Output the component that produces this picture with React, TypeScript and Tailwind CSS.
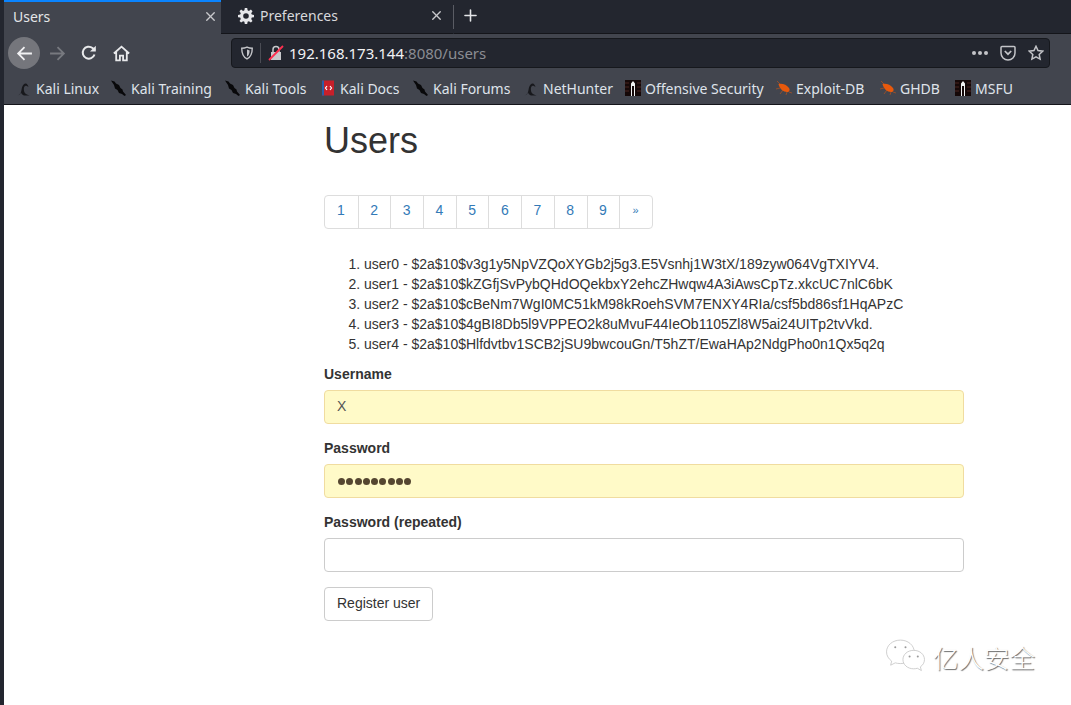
import React from 'react';
import { Plus, X } from 'lucide-react';

const body = "font-['Liberation_Sans',Arial,sans-serif]";
const ui = "font-['Noto_Sans',sans-serif]";

const hashes = [
  'user0 - $2a$10$v3g1y5NpVZQoXYGb2j5g3.E5Vsnhj1W3tX/189zyw064VgTXIYV4.',
  'user1 - $2a$10$kZGfjSvPybQHdOQekbxY2ehcZHwqw4A3iAwsCpTz.xkcUC7nlC6bK',
  'user2 - $2a$10$cBeNm7WgI0MC51kM98kRoehSVM7ENXY4RIa/csf5bd86sf1HqAPzC',
  'user3 - $2a$10$4gBI8Db5l9VPPEO2k8uMvuF44IeOb1105Zl8W5ai24UITp2tvVkd.',
  'user4 - $2a$10$Hlfdvtbv1SCB2jSU9bwcouGn/T5hZT/EwaHAp2NdgPho0n1Qx5q2q',
];

const pages = ['1', '2', '3', '4', '5', '6', '7', '8', '9', '»'];

function KaliArc() {
  return (
    <svg viewBox="0 0 16 16" className="h-4 w-4 shrink-0">
      <path d="M1.500 15.500c2.500-.8 3.500-2.500 4-5.500C6 7 7 4 9.500 3.500c1.500-.2 2.500 2 3 3.500-1-.8-2-1.500-3-1.300-1.800.4-1.800 3-1.500 5 .3 2 1.500 3.500 5.500 4.800H8c-1.500-.6-2.500-1.500-3-3-.6 1.500-1.500 2.500-3.500 3z" fill="#17181c" />
    </svg>
  );
}

function KaliBlade() {
  return (
    <svg viewBox="0 0 16 16" className="h-4 w-4 shrink-0">
      <path d="M0 .500 3.500 1.500 5 3.500l3 1.500 1.500 3 2 1.500.5 2 3 3.500-1.500 1L11 14 8 13 6.500 10 4 8.500 3 5z" fill="#08080a" />
    </svg>
  );
}

function DocsBook() {
  return (
    <svg viewBox="0 0 16 16" className="h-4 w-4 shrink-0">
      <rect x="2" y="0.500" width="12" height="15" fill="#c8202a" />
      <rect x="2" y="0.500" width="2" height="15" fill="#2a5ea8" />
      <path d="M7 6 5.500 8 7 10M10 6l1.500 2L10 10" fill="none" stroke="#fff" strokeWidth="1.200" />
    </svg>
  );
}

function OffsecMark() {
  return (
    <svg viewBox="0 0 16 16" className="h-4 w-4 shrink-0">
      <rect width="16" height="16" fill="#150808" />
      <path d="M0 3h4M0 7h4M0 11h4M12 3h4M12 7h4M12 11h4" stroke="#4a2420" strokeWidth="1" />
      <path d="M6 16V3.500L8 1l2 2.500V16H9V6H7v10z" fill="#f0f0f0" />
    </svg>
  );
}

function ExploitBug() {
  return (
    <svg viewBox="0 0 16 16" className="h-4 w-4 shrink-0">
      <path d="M2.500 4C6 3 10.500 4.500 13 8c1.200 1.800.5 4-2 4-3.500 0-7.500-3-8.500-8z" fill="#e8590c" />
      <path d="M0 9l4-1M4 14l3-4M10 15l1-3M1 1l3 3M13 12l3 1" stroke="#e8590c" strokeWidth="0.800" opacity="0.600" />
    </svg>
  );
}

const bookmarks = [
  { label: 'Kali Linux', icon: <KaliArc />, width: 'w-[95px]' },
  { label: 'Kali Training', icon: <KaliBlade />, width: 'w-[114px]' },
  { label: 'Kali Tools', icon: <KaliBlade />, width: 'w-[95px]' },
  { label: 'Kali Docs', icon: <DocsBook />, width: 'w-[93px]' },
  { label: 'Kali Forums', icon: <KaliBlade />, width: 'w-[110px]' },
  { label: 'NetHunter', icon: <KaliArc />, width: 'w-[102px]' },
  { label: 'Offensive Security', icon: <OffsecMark />, width: 'w-[151px]' },
  { label: 'Exploit-DB', icon: <ExploitBug />, width: 'w-[104px]' },
  { label: 'GHDB', icon: <ExploitBug />, width: 'w-[75px]' },
  { label: 'MSFU', icon: <OffsecMark />, width: 'w-[70px]' },
];

function BrowserChrome() {
  return (
    <div className={`${ui} flex h-[105px] flex-col border-b border-[#14151a] bg-[#42454e]`}>
      {/* Tab strip */}
      <div className="flex h-[34px] items-stretch bg-[#23262f]">
        <div className="flex w-[217px] items-center justify-between border-t-2 border-[#0a84ff] bg-[#42454e] pb-[3px] pl-[9px] pr-[3px] text-[14px] text-[#e4e5e8]">
          <span>Users</span>
          <X size={15} strokeWidth={2.200} className="text-[#c8c9cc]" />
        </div>
        <div className="flex w-[232px] items-center border-b border-[#14151a] pb-[2px] pl-[17px] pr-[9px] text-[14px] text-[#d8d9dc]">
          <svg viewBox="0 0 16 16" className="mr-[6px] h-4 w-4 shrink-0">
            <path d="M6.800 0h2.400l.4 2.300 1.300.6 2-1.300 1.600 1.600-1.300 2 .6 1.300 2.200.4v2.300l-2.200.4-.6 1.300 1.300 2-1.600 1.600-2-1.300-1.300.6-.4 2.200H6.800l-.4-2.200-1.300-.6-2 1.300-1.600-1.600 1.300-2-.6-1.300L0 9.200V6.900l2.200-.4.6-1.300-1.300-2 1.600-1.600 2 1.300 1.300-.6z M8 5.200a2.800 2.800 0 1 0 0 5.600 2.800 2.800 0 0 0 0-5.600z" fill="#e6e7ea" fillRule="evenodd" />
          </svg>
          <span className="flex-1">Preferences</span>
          <X size={15} strokeWidth={2.200} className="text-[#c8c9cc]" />
        </div>
        <div className="my-[5px] w-px bg-[#5a5c64]" />
        <div className="flex w-[33px] items-center justify-center border-b border-[#14151a] pb-[2px]">
          <Plus size={19} strokeWidth={2} className="text-[#e4e5e8]" />
        </div>
        <div className="flex-1 border-b border-[#14151a]" />
      </div>

      {/* Nav toolbar */}
      <div className="flex h-[38px] items-center pl-[4px] pr-[21px]">
        <div className="flex h-8 w-8 items-center justify-center rounded-full bg-[#75767c]">
          <svg viewBox="0 0 16 16" className="h-[17px] w-[17px]" fill="none" stroke="#f1f1f3" strokeWidth="1.700">
            <path d="M15 8H2M8 2 2 8l6 6" />
          </svg>
        </div>
        <svg viewBox="0 0 16 16" className="ml-[9px] h-[17px] w-[17px]" fill="none" stroke="#77797f" strokeWidth="1.700">
          <path d="M1 8h13M8 2l6 6-6 6" />
        </svg>
        <svg viewBox="0 0 16 16" className="ml-[15px] h-4 w-4" fill="none" stroke="#e8e9eb" strokeWidth="2">
          <path d="M13.500 9.500A6 6 0 1 1 11.500 3L14 5" />
          <path d="M14.800 .800v5.700H9z" fill="#e8e9eb" stroke="none" />
        </svg>
        <svg viewBox="0 0 16 16" className="ml-[16px] h-[17px] w-[17px]" fill="none" stroke="#e8e9eb" strokeWidth="1.700">
          <path d="M.800 8 8 1.500 15.200 8M3 6.500V14.500h3.500V10h3v4.500H13V6.500" />
        </svg>
        <div className="ml-[101px] flex h-[30px] flex-1 items-center rounded-[4px] border border-[#16181d] bg-[#23262f]">
          <div className="flex w-[22px] justify-end">
            <svg viewBox="0 0 16 16" className="h-[14px] w-[14px]" fill="none" stroke="#c3c4c8" strokeWidth="1.600">
              <path d="M8 1.200c2 .9 4 1.300 6 1.300 0 6-1.500 10-6 12.300C3.500 12.500 2 8.500 2 2.500c2 0 4-.4 6-1.300z" />
              <path d="M8 4v8c2-1.200 3-3.500 3-7z" fill="#c3c4c8" stroke="none" />
            </svg>
          </div>
          <div className="ml-[6px] h-[20px] w-px bg-[#4a4c54]" />
          <svg viewBox="0 0 16 16" className="ml-[7px] h-4 w-4">
            <path d="M3 7h10v8H3z" fill="#c8c9cc" />
            <path d="M5 7V4.500a3 3 0 0 1 6 0V7" fill="none" stroke="#c8c9cc" strokeWidth="1.500" />
            <path d="M1 15 15 1" stroke="#ff3050" strokeWidth="1.800" />
          </svg>
          <span className="ml-[5px] text-[15px] text-[#f2f2f4]">
            192.168.173.144<span className="text-[#8b8d93]">:8080/users</span>
          </span>
          <div className="ml-auto flex items-center pr-[5px]">
            <div className="flex gap-[2px]">
              <div className="h-[4px] w-[4px] rounded-full bg-[#c3c4c8]" />
              <div className="h-[4px] w-[4px] rounded-full bg-[#c3c4c8]" />
              <div className="h-[4px] w-[4px] rounded-full bg-[#c3c4c8]" />
            </div>
            <svg viewBox="0 0 16 16" className="ml-[12px] h-4 w-4" fill="none" stroke="#c3c4c8" strokeWidth="1.500">
              <path d="M2 1.500h12c.6 0 1 .4 1 1V8a7 7 0 0 1-14 0V2.500c0-.6.4-1 1-1z" />
              <path d="M4.800 6 8 9.200 11.200 6" strokeWidth="1.700" />
            </svg>
            <svg viewBox="0 0 16 16" className="ml-[12px] h-4 w-4" fill="none" stroke="#c3c4c8" strokeWidth="1.500">
              <path d="m8 1.300 2 4.300 4.700.6-3.500 3.200.9 4.700L8 11.800l-4.100 2.300.9-4.700L1.300 6.200 6 5.600z" />
            </svg>
          </div>
        </div>
      </div>

      {/* Bookmarks toolbar */}
      <div className="flex h-[32px] items-center pl-[12px] text-[14px] text-[#dfe3ea]">
        {bookmarks.map((b) => (
          <div key={b.label} className={`flex shrink-0 items-center gap-[4px] whitespace-nowrap ${b.width}`}>
            {b.icon}
            <span>{b.label}</span>
          </div>
        ))}
      </div>
    </div>
  );
}

function Field({ label, value, filled }: { label: string; value?: string; filled?: boolean }) {
  return (
    <div className="mb-[14px]">
      <label className="mb-[6px] block text-[14px] font-bold leading-[20px] text-[#333]">{label}</label>
      <div
        className={`flex h-[34px] items-center rounded-[4px] border px-[12px] pb-[2px] text-[14px] ${
          filled ? 'border-[#f0dca0] bg-[#fffac8] text-[#555]' : 'border-[#ccc] bg-white'
        }`}
      >
        {value}
      </div>
    </div>
  );
}

export default function App() {
  return (
    <div className="flex h-[705px] w-[1071px] overflow-hidden bg-white">
      <div className="w-[4px] shrink-0 bg-[#23262f]" />
      <div className="flex min-w-0 flex-1 flex-col">
        <BrowserChrome />

        <div className={`${body} relative flex-1 pl-[320px] text-[#333]`}>
          <div className="w-[640px]">
            <h1 className="mb-[10px] mt-[16px] text-[36px] font-medium leading-[40px] text-[#333]">Users</h1>

            {/* Pagination */}
            <div className="mt-[34px] flex h-[34px] w-fit rounded-[4px] border border-[#ddd] bg-white text-[14px] text-[#337ab7]">
              {pages.map((p, i) => (
                <div
                  key={p}
                  className={`flex h-full w-[32.700px] items-center justify-center pb-[3px] pr-px ${i > 0 ? 'border-l border-[#ddd]' : ''} ${p === '»' ? 'text-[11px]' : ''}`}
                >
                  {p}
                </div>
              ))}
            </div>

            <ol className="mb-[10px] mt-[25px] list-decimal pl-[40px] text-[14px] leading-[20px]">
              {hashes.map((h) => (
                <li key={h}>{h}</li>
              ))}
            </ol>

            <Field label="Username" value="X" filled />
            <div className="mb-[14px]">
              <label className="mb-[6px] block text-[14px] font-bold leading-[20px] text-[#333]">Password</label>
              <div className="flex h-[34px] items-center gap-[1.300px] rounded-[4px] border border-[#f0dca0] bg-[#fffac8] pl-[13px]">
                {Array.from({ length: 9 }).map((_, i) => (
                  <div key={i} className="h-[7px] w-[7px] rounded-full bg-[#554630]" />
                ))}
              </div>
            </div>
            <Field label="Password (repeated)" />

            <button className="mt-px h-[34px] rounded-[4px] border border-[#ccc] bg-white px-[12px] pb-[2px] text-[14px] text-[#333]">
              Register user
            </button>
          </div>

          {/* Watermark */}
          <div className="absolute left-[881px] top-[533px] flex items-center gap-[7px]">
            <svg viewBox="0 0 40 34" className="h-[37px] w-[41px]" fill="#fff" stroke="#bdbdbd" strokeWidth="0.700">
              <path d="M15 1C7.500 1 1.500 6 1.500 12.500c0 3.700 2 6.800 5 9l-1 4 4.500-2.300c1.500.4 3 .7 5 .7 7.500 0 13.500-5 13.500-11.400S22.500 1 15 1z" />
              <path d="M28 11c-6 0-10.500 4-10.500 9s4.500 9 10.500 9c1.300 0 2.500-.2 3.600-.5l3.900 2.200-1-3.600c2.500-1.700 4-4.200 4-7.100 0-5-4.500-9-10.500-9z" />
              <circle cx="10" cy="8" r="1" fill="#999" stroke="none" />
              <circle cx="20" cy="8" r="1" fill="#999" stroke="none" />
              <circle cx="24" cy="17" r="1" fill="#999" stroke="none" />
              <circle cx="32" cy="17" r="1" fill="#999" stroke="none" />
            </svg>
            <span className="font-['Noto_Sans_CJK_SC',sans-serif] text-[25.500px] font-light leading-[34px] text-white [text-shadow:1px_1px_1px_#666]">
              亿人安全
            </span>
          </div>
        </div>
      </div>
    </div>
  );
}
